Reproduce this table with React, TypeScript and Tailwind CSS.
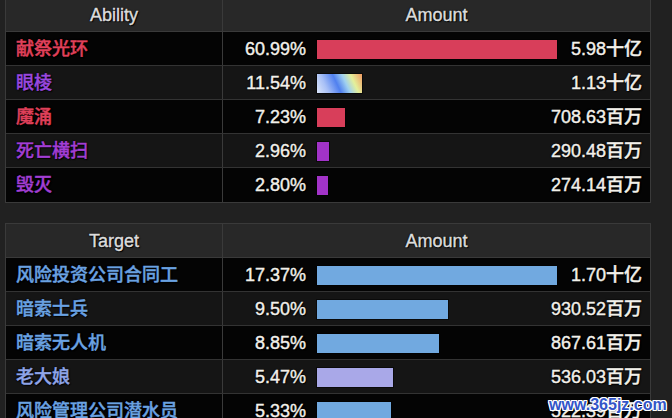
import React from "react";

type Row = { name: string; color: string; pct: number; amount: string; bar: string };

const abilities: Row[] = [
  { name: "献祭光环", color: "#e0405a", pct: 60.99, amount: "5.98十亿", bar: "bg-[#d83e5a]" },
  { name: "眼棱", color: "#9a48de", pct: 11.54, amount: "1.13十亿", bar: "bg-[linear-gradient(65deg,#dce6fa_0%,#a8c0f6_22%,#5080ef_45%,#9fd0f0_62%,#e4f09a_78%,#f09a62_100%)]" },
  { name: "魔涌", color: "#e0405a", pct: 7.23, amount: "708.63百万", bar: "bg-[#d83e5a]" },
  { name: "死亡横扫", color: "#a23ed4", pct: 2.96, amount: "290.48百万", bar: "bg-[#a233c8]" },
  { name: "毁灭", color: "#a23ed4", pct: 2.8, amount: "274.14百万", bar: "bg-[#a233c8]" },
];

const targets: Row[] = [
  { name: "风险投资公司合同工", color: "#6aa2e2", pct: 17.37, amount: "1.70十亿", bar: "bg-[#71a9e0]" },
  { name: "暗索士兵", color: "#6aa2e2", pct: 9.5, amount: "930.52百万", bar: "bg-[#71a9e0]" },
  { name: "暗索无人机", color: "#6aa2e2", pct: 8.85, amount: "867.61百万", bar: "bg-[#71a9e0]" },
  { name: "老大娘", color: "#8fa4e8", pct: 5.47, amount: "536.03百万", bar: "bg-[#a9a8e8]" },
  { name: "风险管理公司潜水员", color: "#6aa2e2", pct: 5.33, amount: "522.39百万", bar: "bg-[#71a9e0]" },
];

const font = "font-['Liberation_Sans','Noto_Sans_CJK_SC',sans-serif]";
const shadow =
  "[text-shadow:0_0_2px_#000,0_0_1px_#000,1px_1px_1px_#000] [-webkit-text-stroke:0.4px_currentColor]";

function Table({ title, rows, className }: { title: string; rows: Row[]; className: string }) {
  const max = rows[0].pct;
  return (
    <div className={`ml-[5px] w-[646px] border border-[#3a3a3a] ${className}`}>
      <div className="flex h-[34px] border-b border-[#3a3a3a] bg-[#282828] text-[18px] text-[#dcdcdc]">
        <div className={`flex w-[217px] items-center justify-center border-r border-[#3a3a3a] pt-px ${shadow}`}>{title}</div>
        <div className={`flex flex-1 items-center justify-center pt-px ${shadow}`}>Amount</div>
      </div>
      {rows.map((r, i) => (
        <div
          key={r.name}
          className={`flex h-[34px] ${i < rows.length - 1 ? "border-b border-[#333333]" : ""} ${i % 2 === 0 ? "bg-[#040404]" : "bg-[#151515]"}`}
        >
          <div className="flex w-[217px] items-center border-r border-[#3a3a3a] pl-[10px] pt-px text-[18px] font-medium">
            <span className={`${shadow} whitespace-nowrap`} style={{ color: r.color }}>
              {r.name}
            </span>
          </div>
          <div className="flex flex-1 items-center pr-[8px] pt-px text-[18px] font-medium text-[#f2f0ea]">
            <span className={`w-[83px] text-right ${shadow}`}>{r.pct.toFixed(2)}%</span>
            <div className="ml-[11px] flex-1">
              <div
                className={`h-[19px] ${r.bar} shadow-[0_0_0_1px_rgba(0,0,0,0.5)]`}
                style={{ width: `${(r.pct / max) * 240}px` }}
              />
            </div>
            <span className={`whitespace-nowrap ${shadow}`}>{r.amount}</span>
          </div>
        </div>
      ))}
    </div>
  );
}

export default function App() {
  return (
    <div className={`relative h-[418px] w-[672px] overflow-hidden bg-[#212121] ${font}`}>
      <Table title="Ability" rows={abilities} className="-mt-[3px]" />
      <Table title="Target" rows={targets} className="mt-[20px]" />
      <div className="absolute left-[549px] top-[393px] text-[16px] font-bold text-[#3355c8] [text-shadow:1px_0_0_#fff,-1px_0_0_#fff,0_1px_0_#fff,0_-1px_0_#fff,1px_1px_0_#fff,-1px_-1px_0_#fff,1px_-1px_0_#fff,-1px_1px_0_#fff]">
        www.365jz.com
      </div>
    </div>
  );
}
